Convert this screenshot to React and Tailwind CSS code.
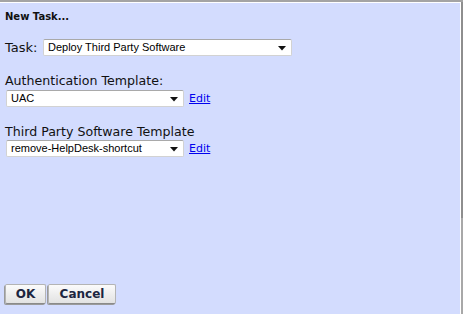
import React from 'react';

const Select = ({ value, className }) => (
  <div className={`relative flex items-center bg-white border border-[#d2d2d2] border-t-[#a9a9a9] rounded-[2px] h-[17px] ${className}`}>
    <span className="pl-[4px] text-[11px] leading-none text-black font-['Liberation_Sans',Arial,sans-serif]">{value}</span>
    <svg className="absolute right-[5px] top-[6px]" width="8" height="5" viewBox="0 0 8 5">
      <path d="M0 0h8L4 4.5z" fill="#111" />
    </svg>
  </div>
);

const EditLink = () => (
  <a href="#" className="ml-[5px] text-[11px] text-[#0000ee] underline font-['DejaVu_Sans',Verdana,sans-serif] leading-none">Edit</a>
);

const Button = ({ children, className }) => (
  <button className={`h-[20px] border border-[#b4b4b4] border-b-[#8a8a8a] rounded-[2px] bg-gradient-to-b from-[#fbfbfb] to-[#e2e2e2] text-[12px] font-bold text-[#1c2540] font-['DejaVu_Sans',Verdana,sans-serif] leading-none shadow-[-1px_1px_0_#9a9a9a] ${className}`}>
    {children}
  </button>
);

export default function App() {
  return (
    <div className="w-[463px] h-[314px] flex flex-col bg-[#a4a4a4] overflow-hidden">
      <div className="h-[2px] shrink-0" />
      <div className="flex flex-1 min-h-0">
        <div className="flex-1 flex flex-col bg-[#d3dcfe] border-t border-r border-white font-['DejaVu_Sans',Verdana,sans-serif] text-[#111]">
          <div className="pl-[5px] pt-[9px] text-[10px] font-bold leading-none">New Task...</div>

          <div className="flex items-center pl-[5px] mt-[17px]">
            <span className="text-[13px] leading-none w-[38px]">Task:</span>
            <Select value="Deploy Third Party Software" className="w-[249px]" />
          </div>

          <div className="pl-[5px] mt-[19px] text-[12.6px] leading-none">Authentication Template:</div>
          <div className="flex items-center pl-[6px] mt-[2px]">
            <Select value="UAC" className="w-[178px]" />
            <EditLink />
          </div>

          <div className="pl-[5px] mt-[19px] text-[12.6px] leading-none">Third Party Software Template</div>
          <div className="flex items-center pl-[6px] mt-[2px]">
            <Select value="remove-HelpDesk-shortcut" className="w-[178px]" />
            <EditLink />
          </div>

          <div className="flex gap-[2px] pl-[5px] mt-auto mb-[10px]">
            <Button className="w-[41px]">OK</Button>
            <Button className="w-[68px]">Cancel</Button>
          </div>
        </div>
        <div className="w-[2px] shrink-0 flex flex-col">
          <div className="h-[216px] bg-[#8e8e8e]" />
          <div className="flex-1 bg-[#a8a8a8]" />
        </div>
      </div>
    </div>
  );
}
